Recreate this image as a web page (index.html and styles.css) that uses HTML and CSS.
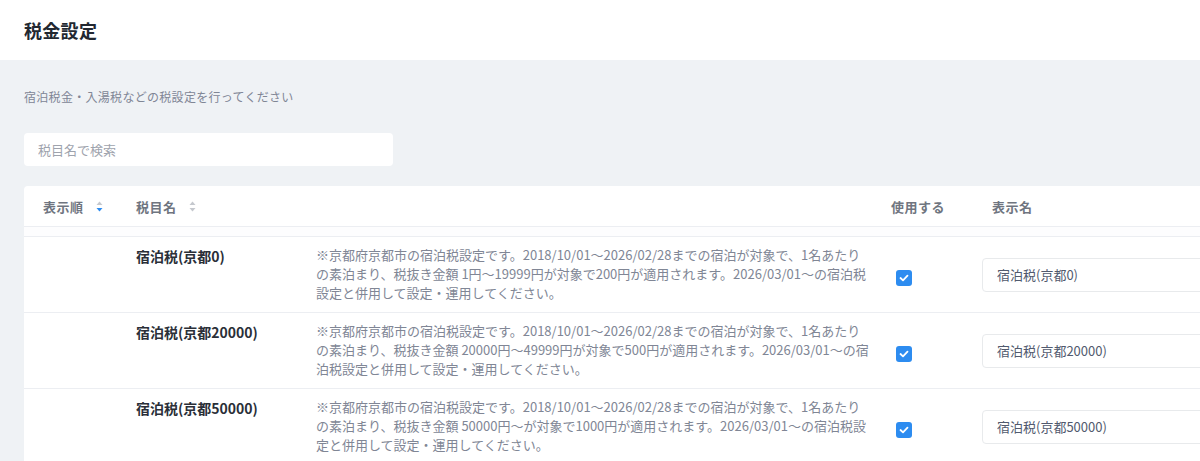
FILE: index.html
```html
<!DOCTYPE html>
<html lang="ja">
<head>
<meta charset="utf-8">
<title>税金設定</title>
<link rel="stylesheet" href="styles.css">
</head>
<body>
<header class="topbar"><h1 class="title">税金設定</h1></header>
<main class="main">
  <p class="lead">宿泊税金・入湯税などの税設定を行ってください</p>
  <div class="search"><input class="search-input" type="text" placeholder="税目名で検索"></div>
  <section class="card">
    <div class="row head">
      <div class="c1 hcell">表示順 <span class="sort"><svg width="7" height="11" viewBox="0 0 7 11"><path d="M3.5 0.5 L6.5 4 L0.5 4 Z" fill="#c5c8ce"/><path d="M0.5 7 L6.5 7 L3.5 10.5 Z" fill="#2d8cf0"/></svg></span></div>
      <div class="c2 hcell">税目名 <span class="sort"><svg width="7" height="11" viewBox="0 0 7 11"><path d="M3.5 0.5 L6.5 4 L0.5 4 Z" fill="#c5c8ce"/><path d="M0.5 7 L6.5 7 L3.5 10.5 Z" fill="#c5c8ce"/></svg></span></div>
      <div class="c3 hcell"></div>
      <div class="c4 hcell">使用する</div>
      <div class="c5 hcell">表示名</div>
    </div>
    <div class="spacer"></div>
    <div class="row item">
      <div class="c1"></div>
      <div class="c2 name">宿泊税(京都0)</div>
      <div class="c3 desc">※京都府京都市の宿泊税設定です。2018/10/01～2026/02/28までの宿泊が対象で、1名あたりの素泊まり、税抜き金額 1円～19999円が対象で200円が適用されます。2026/03/01～の宿泊税設定と併用して設定・運用してください。</div>
      <div class="c4 chk"><span class="checkbox"><svg width="10" height="8" viewBox="0 0 10 8"><path d="M1.5 4 L4 6.3 L8.5 1.6" fill="none" stroke="#fff" stroke-width="1.8" stroke-linecap="round" stroke-linejoin="round"/></svg></span></div>
      <div class="c5 inp"><input class="text-input" type="text" value="宿泊税(京都0)"></div>
    </div>
    <div class="row item">
      <div class="c1"></div>
      <div class="c2 name">宿泊税(京都20000)</div>
      <div class="c3 desc">※京都府京都市の宿泊税設定です。2018/10/01～2026/02/28までの宿泊が対象で、1名あたりの素泊まり、税抜き金額 20000円～49999円が対象で500円が適用されます。2026/03/01～の宿泊税設定と併用して設定・運用してください。</div>
      <div class="c4 chk"><span class="checkbox"><svg width="10" height="8" viewBox="0 0 10 8"><path d="M1.5 4 L4 6.3 L8.5 1.6" fill="none" stroke="#fff" stroke-width="1.8" stroke-linecap="round" stroke-linejoin="round"/></svg></span></div>
      <div class="c5 inp"><input class="text-input" type="text" value="宿泊税(京都20000)"></div>
    </div>
    <div class="row item">
      <div class="c1"></div>
      <div class="c2 name">宿泊税(京都50000)</div>
      <div class="c3 desc">※京都府京都市の宿泊税設定です。2018/10/01～2026/02/28までの宿泊が対象で、1名あたりの素泊まり、税抜き金額 50000円～が対象で1000円が適用されます。2026/03/01～の宿泊税設定と併用して設定・運用してください。</div>
      <div class="c4 chk"><span class="checkbox"><svg width="10" height="8" viewBox="0 0 10 8"><path d="M1.5 4 L4 6.3 L8.5 1.6" fill="none" stroke="#fff" stroke-width="1.8" stroke-linecap="round" stroke-linejoin="round"/></svg></span></div>
      <div class="c5 inp"><input class="text-input" type="text" value="宿泊税(京都50000)"></div>
    </div>
  </section>
</main>
</body>
</html>
```
FILE: styles.css
```css
* { box-sizing: border-box; }
html, body { margin: 0; padding: 0; }
body {
  width: 1200px;
  height: 461px;
  overflow: hidden;
  background: #eff2f5;
  font-family: "Noto Sans CJK JP", "Noto Sans", sans-serif;
  color: #515a6e;
}
.topbar {
  height: 60px;
  background: #fff;
  display: flex;
  align-items: center;
  padding: 0 24px;
}
.title {
  margin: 0;
  font-size: 18px;
  font-weight: 700;
  color: #222831;
  letter-spacing: 0.3px;
}
.main { padding: 27px 24px 0; }
.lead {
  margin: 0;
  font-size: 12px;
  line-height: 20px;
  color: #808695;
  letter-spacing: 0.3px;
}
.search { margin-top: 26px; width: 369px; }
.search-input {
  width: 100%;
  height: 33px;
  border: none;
  border-radius: 4px;
  background: #fff;
  padding: 0 14px;
  font-family: inherit;
  font-size: 13px;
  outline: none;
}
.search-input::placeholder { color: #9ea3ad; }
.card {
  margin-top: 20px;
  width: 1400px;
  background: #fff;
  border-radius: 4px 4px 0 0;
}
.row {
  display: grid;
  grid-template-columns: 112px 180px 565px 101px 300px;
  border-bottom: 1px solid #eceef2;
}
.head { height: 41px; align-items: center; }
.hcell {
  font-size: 13px;
  font-weight: 700;
  color: #6f7580;
  letter-spacing: 0.5px;
  display: flex;
  align-items: center;
}
.c1.hcell { padding-left: 19px; }
.c4.hcell, .c5.hcell { padding-left: 10px; }
.sort { display: inline-flex; margin-left: 12px; }
.spacer { height: 10px; border-bottom: 1px solid #eceef2; background: #fdfdfe; }
.item { min-height: 76px; }
.name {
  padding-top: 9px;
  font-size: 14px;
  font-weight: 700;
  line-height: 20px;
  color: #2a2f38;
}
.desc {
  padding: 8px 10px 9px 0;
  font-size: 13px;
  line-height: 19px;
  color: #808695;
}
.chk { display: flex; align-items: center; padding-left: 15px; padding-top: 6px; }
.checkbox {
  width: 16px;
  height: 16px;
  border-radius: 3px;
  background: #2d8cf0;
  display: flex;
  align-items: center;
  justify-content: center;
}
.inp { display: flex; align-items: center; }
.text-input {
  width: 100%;
  height: 34px;
  border: 1px solid #e8eaec;
  border-radius: 4px;
  padding: 0 14px;
  font-family: inherit;
  font-size: 13px;
  color: #515a6e;
  background: #fff;
  outline: none;
}
```
